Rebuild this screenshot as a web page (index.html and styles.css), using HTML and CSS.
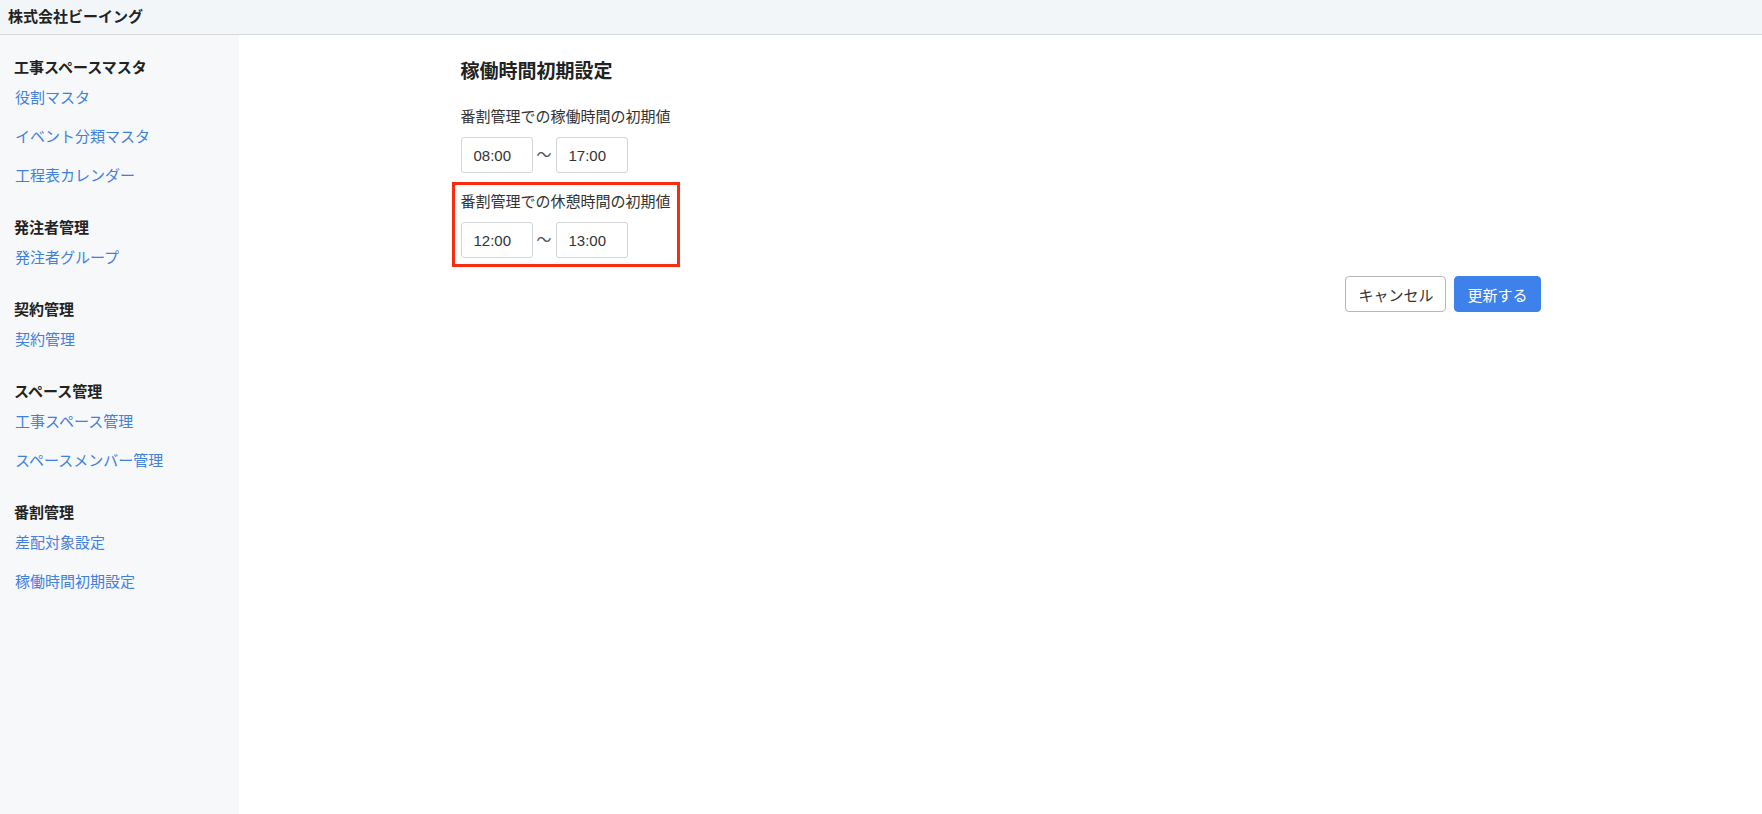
FILE: index.html
```html
<!DOCTYPE html>
<html lang="ja">

<head>
    <meta charset="UTF-8">
    <meta name="viewport" content="width=device-width, initial-scale=1.0">
    <title>稼働時間初期設定</title>
    <link rel="stylesheet" href="styles.css">
</head>

<body>
    <!-- Top bar -->
    <header class="topbar">株式会社ビーイング</header>

    <div class="layout">
        <!-- Side menu -->
        <nav class="sidebar">
            <div class="menu-group">
                <div class="menu-title">工事スペースマスタ</div>
                <a href="#" class="menu-link">役割マスタ</a>
                <a href="#" class="menu-link">イベント分類マスタ</a>
                <a href="#" class="menu-link">工程表カレンダー</a>
            </div>
            <div class="menu-group">
                <div class="menu-title">発注者管理</div>
                <a href="#" class="menu-link">発注者グループ</a>
            </div>
            <div class="menu-group">
                <div class="menu-title">契約管理</div>
                <a href="#" class="menu-link">契約管理</a>
            </div>
            <div class="menu-group">
                <div class="menu-title">スペース管理</div>
                <a href="#" class="menu-link">工事スペース管理</a>
                <a href="#" class="menu-link">スペースメンバー管理</a>
            </div>
            <div class="menu-group">
                <div class="menu-title">番割管理</div>
                <a href="#" class="menu-link">差配対象設定</a>
                <a href="#" class="menu-link">稼働時間初期設定</a>
            </div>
        </nav>

        <!-- Main -->
        <main class="main">
            <div class="content">
                <h2 class="page-title">稼働時間初期設定</h2>

                <div class="field">
                    <label class="field-label">番割管理での稼働時間の初期値</label>
                    <div class="time-range">
                        <input type="text" class="time-input" value="08:00">
                        <span class="tilde">〜</span>
                        <input type="text" class="time-input" value="17:00">
                    </div>
                </div>

                <div class="field highlight">
                    <label class="field-label">番割管理での休憩時間の初期値</label>
                    <div class="time-range">
                        <input type="text" class="time-input" value="12:00">
                        <span class="tilde">〜</span>
                        <input type="text" class="time-input" value="13:00">
                    </div>
                </div>

                <div class="actions">
                    <button class="btn btn-cancel">キャンセル</button>
                    <button class="btn btn-primary">更新する</button>
                </div>
            </div>
        </main>
    </div>
</body>

</html>
```

FILE: styles.css
```css
body {
    font-family: "Liberation Sans", "Noto Sans CJK JP", sans-serif;
    font-size: 15px;
    color: #333;
    margin: 0;
    padding: 0;
    background-color: #fff;
}

/* Top bar */
.topbar {
    height: 34px;
    line-height: 33px;
    padding-left: 8px;
    background-color: #f3f6f9;
    border-bottom: 1px solid #d6d9dd;
    font-weight: bold;
    font-size: 15px;
    color: #222;
}

.layout {
    display: flex;
    min-height: calc(100vh - 35px);
}

/* Side menu */
.sidebar {
    width: 239px;
    flex-shrink: 0;
    background-color: #f7f8fa;
    padding: 22px 14px 0;
    box-sizing: border-box;
}

.menu-group {
    margin-bottom: 22px;
}

.menu-title {
    font-weight: bold;
    line-height: 21px;
    color: #222;
}

.menu-link {
    display: block;
    line-height: 39px;
    padding-left: 1px;
    color: #3f80e0;
    text-decoration: none;
}

.menu-link:hover {
    text-decoration: underline;
}

/* Main */
.main {
    flex: 1;
}

.content {
    max-width: 1080px;
    margin: 0 auto;
    padding-top: 24px;
}

.page-title {
    margin: 0 0 21px;
    font-size: 19px;
    line-height: 26px;
    color: #222;
}

.field {
    margin-bottom: 18px;
}

.field-label {
    display: block;
    line-height: 22px;
    margin-bottom: 9px;
}

.field.highlight {
    width: fit-content;
    outline: 3px solid #f92c10;
    outline-offset: 6px;
}

.time-range {
    display: flex;
    align-items: center;
}

.time-input {
    width: 72px;
    height: 36px;
    box-sizing: border-box;
    padding: 0 12px;
    border: 1px solid #d3d6da;
    border-radius: 3px;
    font-family: inherit;
    font-size: 15px;
    color: #333;
}

.tilde {
    width: 23px;
    text-align: center;
    font-size: 15px;
    line-height: 20px;
    color: #555;
}

.actions {
    display: flex;
    justify-content: flex-end;
    gap: 8px;
}

.btn {
    height: 36px;
    padding: 0 12px;
    border-radius: 4px;
    font-family: inherit;
    font-size: 15px;
    cursor: pointer;
}

.btn-cancel {
    background-color: #fff;
    border: 1px solid #b4b6b8;
    color: #333;
}

.btn-primary {
    background-color: #3f81ea;
    border: 1px solid #3f81ea;
    color: #fff;
}

.btn-primary:hover {
    background-color: #2f6fd6;
}
```
